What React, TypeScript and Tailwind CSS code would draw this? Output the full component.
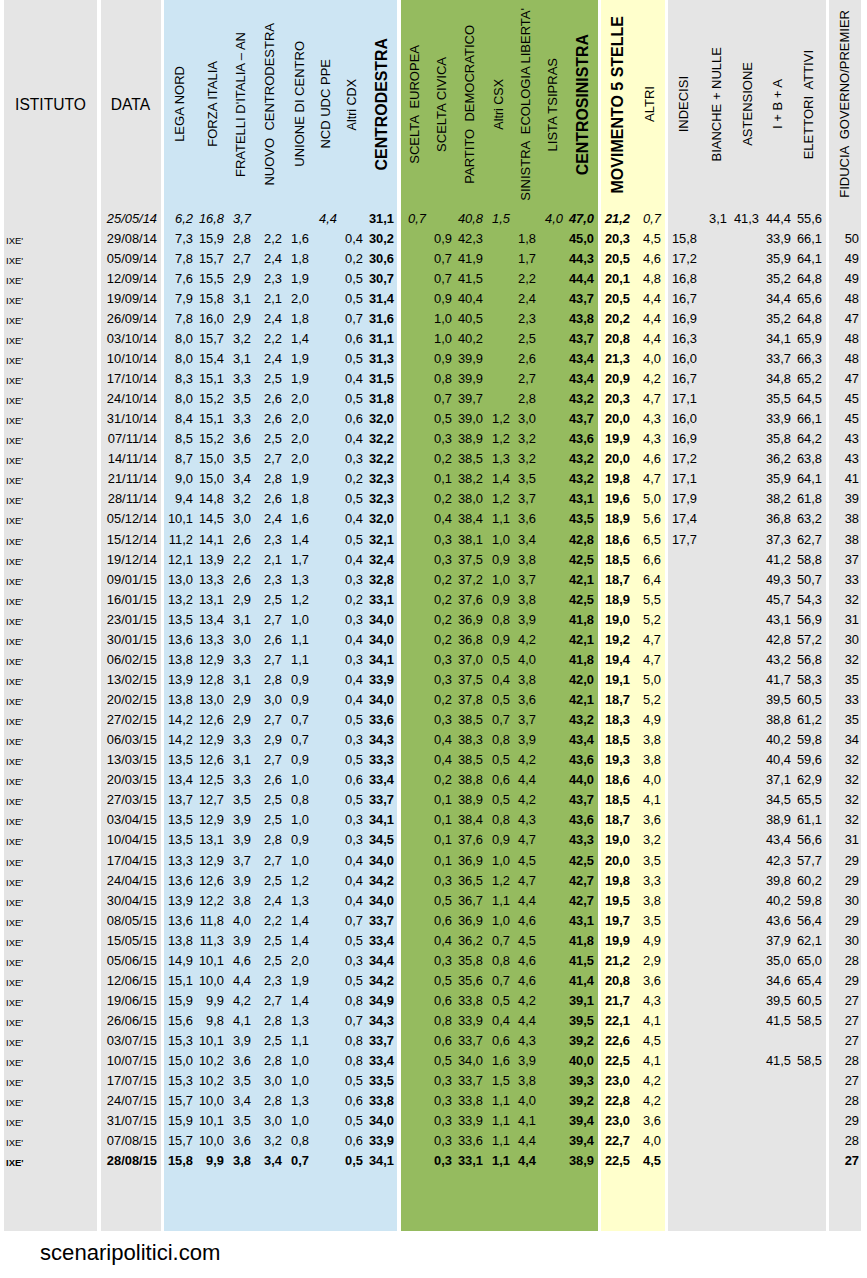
const ROWS = [
  "25/05/14 6,2 16,8 3,7 _ _ 4,4 _ 31,1 0,7 _ 40,8 1,5 _ 4,0 47,0 21,2 0,7 _ 3,1 41,3 44,4 55,6 _",
  "29/08/14 7,3 15,9 2,8 2,2 1,6 _ 0,4 30,2 _ 0,9 42,3 _ 1,8 _ 45,0 20,3 4,5 15,8 _ _ 33,9 66,1 50",
  "05/09/14 7,8 15,7 2,7 2,4 1,8 _ 0,2 30,6 _ 0,7 41,9 _ 1,7 _ 44,3 20,5 4,6 17,2 _ _ 35,9 64,1 49",
  "12/09/14 7,6 15,5 2,9 2,3 1,9 _ 0,5 30,7 _ 0,7 41,5 _ 2,2 _ 44,4 20,1 4,8 16,8 _ _ 35,2 64,8 49",
  "19/09/14 7,9 15,8 3,1 2,1 2,0 _ 0,5 31,4 _ 0,9 40,4 _ 2,4 _ 43,7 20,5 4,4 16,7 _ _ 34,4 65,6 48",
  "26/09/14 7,8 16,0 2,9 2,4 1,8 _ 0,7 31,6 _ 1,0 40,5 _ 2,3 _ 43,8 20,2 4,4 16,9 _ _ 35,2 64,8 47",
  "03/10/14 8,0 15,7 3,2 2,2 1,4 _ 0,6 31,1 _ 1,0 40,2 _ 2,5 _ 43,7 20,8 4,4 16,3 _ _ 34,1 65,9 48",
  "10/10/14 8,0 15,4 3,1 2,4 1,9 _ 0,5 31,3 _ 0,9 39,9 _ 2,6 _ 43,4 21,3 4,0 16,0 _ _ 33,7 66,3 48",
  "17/10/14 8,3 15,1 3,3 2,5 1,9 _ 0,4 31,5 _ 0,8 39,9 _ 2,7 _ 43,4 20,9 4,2 16,7 _ _ 34,8 65,2 47",
  "24/10/14 8,0 15,2 3,5 2,6 2,0 _ 0,5 31,8 _ 0,7 39,7 _ 2,8 _ 43,2 20,3 4,7 17,1 _ _ 35,5 64,5 45",
  "31/10/14 8,4 15,1 3,3 2,6 2,0 _ 0,6 32,0 _ 0,5 39,0 1,2 3,0 _ 43,7 20,0 4,3 16,0 _ _ 33,9 66,1 45",
  "07/11/14 8,5 15,2 3,6 2,5 2,0 _ 0,4 32,2 _ 0,3 38,9 1,2 3,2 _ 43,6 19,9 4,3 16,9 _ _ 35,8 64,2 43",
  "14/11/14 8,7 15,0 3,5 2,7 2,0 _ 0,3 32,2 _ 0,2 38,5 1,3 3,2 _ 43,2 20,0 4,6 17,2 _ _ 36,2 63,8 43",
  "21/11/14 9,0 15,0 3,4 2,8 1,9 _ 0,2 32,3 _ 0,1 38,2 1,4 3,5 _ 43,2 19,8 4,7 17,1 _ _ 35,9 64,1 41",
  "28/11/14 9,4 14,8 3,2 2,6 1,8 _ 0,5 32,3 _ 0,2 38,0 1,2 3,7 _ 43,1 19,6 5,0 17,9 _ _ 38,2 61,8 39",
  "05/12/14 10,1 14,5 3,0 2,4 1,6 _ 0,4 32,0 _ 0,4 38,4 1,1 3,6 _ 43,5 18,9 5,6 17,4 _ _ 36,8 63,2 38",
  "15/12/14 11,2 14,1 2,6 2,3 1,4 _ 0,5 32,1 _ 0,3 38,1 1,0 3,4 _ 42,8 18,6 6,5 17,7 _ _ 37,3 62,7 38",
  "19/12/14 12,1 13,9 2,2 2,1 1,7 _ 0,4 32,4 _ 0,3 37,5 0,9 3,8 _ 42,5 18,5 6,6 _ _ _ 41,2 58,8 37",
  "09/01/15 13,0 13,3 2,6 2,3 1,3 _ 0,3 32,8 _ 0,2 37,2 1,0 3,7 _ 42,1 18,7 6,4 _ _ _ 49,3 50,7 33",
  "16/01/15 13,2 13,1 2,9 2,5 1,2 _ 0,2 33,1 _ 0,2 37,6 0,9 3,8 _ 42,5 18,9 5,5 _ _ _ 45,7 54,3 32",
  "23/01/15 13,5 13,4 3,1 2,7 1,0 _ 0,3 34,0 _ 0,2 36,9 0,8 3,9 _ 41,8 19,0 5,2 _ _ _ 43,1 56,9 31",
  "30/01/15 13,6 13,3 3,0 2,6 1,1 _ 0,4 34,0 _ 0,2 36,8 0,9 4,2 _ 42,1 19,2 4,7 _ _ _ 42,8 57,2 30",
  "06/02/15 13,8 12,9 3,3 2,7 1,1 _ 0,3 34,1 _ 0,3 37,0 0,5 4,0 _ 41,8 19,4 4,7 _ _ _ 43,2 56,8 32",
  "13/02/15 13,9 12,8 3,1 2,8 0,9 _ 0,4 33,9 _ 0,3 37,5 0,4 3,8 _ 42,0 19,1 5,0 _ _ _ 41,7 58,3 35",
  "20/02/15 13,8 13,0 2,9 3,0 0,9 _ 0,4 34,0 _ 0,2 37,8 0,5 3,6 _ 42,1 18,7 5,2 _ _ _ 39,5 60,5 33",
  "27/02/15 14,2 12,6 2,9 2,7 0,7 _ 0,5 33,6 _ 0,3 38,5 0,7 3,7 _ 43,2 18,3 4,9 _ _ _ 38,8 61,2 35",
  "06/03/15 14,2 12,9 3,3 2,9 0,7 _ 0,3 34,3 _ 0,4 38,3 0,8 3,9 _ 43,4 18,5 3,8 _ _ _ 40,2 59,8 34",
  "13/03/15 13,5 12,6 3,1 2,7 0,9 _ 0,5 33,3 _ 0,4 38,5 0,5 4,2 _ 43,6 19,3 3,8 _ _ _ 40,4 59,6 32",
  "20/03/15 13,4 12,5 3,3 2,6 1,0 _ 0,6 33,4 _ 0,2 38,8 0,6 4,4 _ 44,0 18,6 4,0 _ _ _ 37,1 62,9 32",
  "27/03/15 13,7 12,7 3,5 2,5 0,8 _ 0,5 33,7 _ 0,1 38,9 0,5 4,2 _ 43,7 18,5 4,1 _ _ _ 34,5 65,5 32",
  "03/04/15 13,5 12,9 3,9 2,5 1,0 _ 0,3 34,1 _ 0,1 38,4 0,8 4,3 _ 43,6 18,7 3,6 _ _ _ 38,9 61,1 32",
  "10/04/15 13,5 13,1 3,9 2,8 0,9 _ 0,3 34,5 _ 0,1 37,6 0,9 4,7 _ 43,3 19,0 3,2 _ _ _ 43,4 56,6 31",
  "17/04/15 13,3 12,9 3,7 2,7 1,0 _ 0,4 34,0 _ 0,1 36,9 1,0 4,5 _ 42,5 20,0 3,5 _ _ _ 42,3 57,7 29",
  "24/04/15 13,6 12,6 3,9 2,5 1,2 _ 0,4 34,2 _ 0,3 36,5 1,2 4,7 _ 42,7 19,8 3,3 _ _ _ 39,8 60,2 29",
  "30/04/15 13,9 12,2 3,8 2,4 1,3 _ 0,4 34,0 _ 0,5 36,7 1,1 4,4 _ 42,7 19,5 3,8 _ _ _ 40,2 59,8 30",
  "08/05/15 13,6 11,8 4,0 2,2 1,4 _ 0,7 33,7 _ 0,6 36,9 1,0 4,6 _ 43,1 19,7 3,5 _ _ _ 43,6 56,4 29",
  "15/05/15 13,8 11,3 3,9 2,5 1,4 _ 0,5 33,4 _ 0,4 36,2 0,7 4,5 _ 41,8 19,9 4,9 _ _ _ 37,9 62,1 30",
  "05/06/15 14,9 10,1 4,6 2,5 2,0 _ 0,3 34,4 _ 0,3 35,8 0,8 4,6 _ 41,5 21,2 2,9 _ _ _ 35,0 65,0 28",
  "12/06/15 15,1 10,0 4,4 2,3 1,9 _ 0,5 34,2 _ 0,5 35,6 0,7 4,6 _ 41,4 20,8 3,6 _ _ _ 34,6 65,4 29",
  "19/06/15 15,9 9,9 4,2 2,7 1,4 _ 0,8 34,9 _ 0,6 33,8 0,5 4,2 _ 39,1 21,7 4,3 _ _ _ 39,5 60,5 27",
  "26/06/15 15,6 9,8 4,1 2,8 1,3 _ 0,7 34,3 _ 0,8 33,9 0,4 4,4 _ 39,5 22,1 4,1 _ _ _ 41,5 58,5 27",
  "03/07/15 15,3 10,1 3,9 2,5 1,1 _ 0,8 33,7 _ 0,6 33,7 0,6 4,3 _ 39,2 22,6 4,5 _ _ _ _ _ 27",
  "10/07/15 15,0 10,2 3,6 2,8 1,0 _ 0,8 33,4 _ 0,5 34,0 1,6 3,9 _ 40,0 22,5 4,1 _ _ _ 41,5 58,5 28",
  "17/07/15 15,3 10,2 3,5 3,0 1,0 _ 0,5 33,5 _ 0,3 33,7 1,5 3,8 _ 39,3 23,0 4,2 _ _ _ _ _ 27",
  "24/07/15 15,7 10,0 3,4 2,8 1,3 _ 0,6 33,8 _ 0,3 33,8 1,1 4,0 _ 39,2 22,8 4,2 _ _ _ _ _ 28",
  "31/07/15 15,9 10,1 3,5 3,0 1,0 _ 0,5 34,0 _ 0,3 33,9 1,1 4,1 _ 39,4 23,0 3,6 _ _ _ _ _ 29",
  "07/08/15 15,7 10,0 3,6 3,2 0,8 _ 0,6 33,9 _ 0,3 33,6 1,1 4,4 _ 39,4 22,7 4,0 _ _ _ _ _ 28",
  "28/08/15 15,8 9,9 3,8 3,4 0,7 _ 0,5 34,1 _ 0,3 33,1 1,1 4,4 _ 38,9 22,5 4,5 _ _ _ _ _ 27",
].map((r) => r.split(' '))

type Col = {
  label: string
  w: string
  pr: string
  size?: string
  total?: boolean // bold figures and bold header
  upright?: boolean // first row is not in italics
}

const BANDS: { cls: string; cols: Col[] }[] = [
  {
    cls: 'ml-[3px] w-[233px] bg-[#cde5f3]',
    cols: [
      { label: 'LEGA NORD', w: 'w-[29px]', pr: 'pr-[6.5px]' },
      { label: 'FORZA ITALIA', w: 'w-[31px]', pr: 'pr-[4.5px]' },
      { label: "FRATELLI D'ITALIA – AN", w: 'w-[27px]', pr: 'pr-[3.5px]' },
      { label: 'NUOVO  CENTRODESTRA', w: 'w-[31px]', pr: 'pr-[5.5px]' },
      { label: 'UNIONE DI CENTRO', w: 'w-[27px]', pr: 'pr-[2.5px]' },
      { label: 'NCD UDC PPE', w: 'w-[28px]', pr: 'pr-[4.5px]' },
      { label: 'Altri CDX', w: 'w-[26px]', pr: 'pr-[3.5px]', size: 'text-[12.5px]' },
      { label: 'CENTRODESTRA', w: 'w-[31px]', pr: 'pr-[5.5px]', size: 'text-[15.9px]', total: true, upright: true },
    ],
  },
  {
    cls: 'ml-[4px] w-[197px] bg-[#95bb5f]',
    cols: [
      { label: 'SCELTA  EUROPEA', w: 'w-[25px]', pr: 'pr-[4px]' },
      { label: 'SCELTA CIVICA', w: 'w-[26px]', pr: 'pr-[3.5px]' },
      { label: 'PARTITO  DEMOCRATICO', w: 'w-[31px]', pr: 'pr-[6.5px]' },
      { label: 'Altri CSX', w: 'w-[27px]', pr: 'pr-[3.5px]', size: 'text-[12.5px]' },
      { label: "SINISTRA  ECOLOGIA LIBERTA'", w: 'w-[26px]', pr: 'pr-[3.5px]' },
      { label: 'LISTA TSIPRAS', w: 'w-[27px]', pr: 'pr-[3.5px]' },
      { label: 'CENTROSINISTRA', w: 'w-[31px]', pr: 'pr-[4.5px]', size: 'text-[15.9px]', total: true },
    ],
  },
  {
    cls: 'ml-[3px] w-[64px] bg-[#ffffcc]',
    cols: [
      { label: 'MOVIMENTO 5 STELLE', w: 'w-[29px]', pr: 'pr-[5.5px]', size: 'text-[16px]', total: true },
      { label: 'ALTRI', w: 'w-[31px]', pr: 'pr-[4.5px]' },
    ],
  },
  {
    cls: 'ml-[3px] w-[158px] bg-[#e5e5e5]',
    cols: [
      { label: 'INDECISI', w: 'w-[29px]', pr: 'pr-[6.5px]', upright: true },
      { label: 'BIANCHE + NULLE', w: 'w-[30px]', pr: 'pr-[3.5px]', upright: true },
      { label: 'ASTENSIONE', w: 'w-[32px]', pr: 'pr-[4.5px]', upright: true },
      { label: 'I + B + A', w: 'w-[32px]', pr: 'pr-[6.5px]', upright: true },
      { label: 'ELETTORI  ATTIVI', w: 'w-[31px]', pr: 'pr-[6.5px]', upright: true },
    ],
  },
  {
    cls: 'ml-[3px] w-[32px] bg-[#e5e5e5]',
    cols: [{ label: 'FIDUCIA  GOVERNO/PREMIER', w: 'w-[30px]', pr: 'pr-[7.5px]', upright: true }],
  },
]

const cell = 'h-[20.065px] leading-[20.065px] whitespace-nowrap'
const last = ROWS.length - 1

export default function App() {
  let idx = 0

  return (
    <div className="w-[867px] bg-white text-[12.9px] text-black font-['Liberation_Sans',Arial,sans-serif]">
      <div className="flex h-[1231px] pl-[4px]">
        {/* Istituto */}
        <div className="w-[93px] bg-[#e5e5e5] pl-[2px]">
          <div className="h-[208.5px] flex items-center justify-center pr-[2px] text-[15.6px]">ISTITUTO</div>
          {ROWS.map((r, i) => (
            <div key={r[0]} className={`${cell} pt-[2px] text-[9.5px] ${i === last ? 'font-bold' : ''}`}>
              {i === 0 ? '' : "IXE'"}
            </div>
          ))}
        </div>

        {/* Data */}
        <div className="ml-[4px] w-[60px] bg-[#e5e5e5] pr-[4px]">
          <div className="h-[208.5px] flex items-center justify-center pl-[3px] text-[15.6px]">DATA</div>
          {ROWS.map((r, i) => (
            <div key={r[0]} className={`${cell} text-right ${i === 0 ? 'italic' : ''} ${i === last ? 'font-bold' : ''}`}>
              {r[0]}
            </div>
          ))}
        </div>

        {BANDS.map((band) => (
          <div key={band.cols[0].label} className={`flex ${band.cls}`}>
            {band.cols.map((col) => {
              idx += 1
              const n = idx
              return (
                <div key={col.label} className={`${col.w} shrink-0`}>
                  <div className={`h-[208.5px] flex items-center justify-end ${col.pr}`}>
                    <span className={`[writing-mode:vertical-rl] rotate-180 whitespace-pre leading-[15px] ${col.size ?? 'text-[13px]'} ${col.total ? 'font-bold' : ''}`}>
                      {col.label}
                    </span>
                  </div>
                  {ROWS.map((r, i) => (
                    <div
                      key={r[0]}
                      className={`${cell} text-right ${col.total || i === last ? 'font-bold' : ''} ${i === 0 && !col.upright ? 'italic' : ''}`}
                    >
                      {r[n] === '_' ? '' : r[n]}
                    </div>
                  ))}
                </div>
              )
            })}
          </div>
        ))}
      </div>

      <div className="h-[47px] pl-[40px] pt-[9px] text-[22.1px] leading-[26px]">scenaripolitici.com</div>
    </div>
  )
}
